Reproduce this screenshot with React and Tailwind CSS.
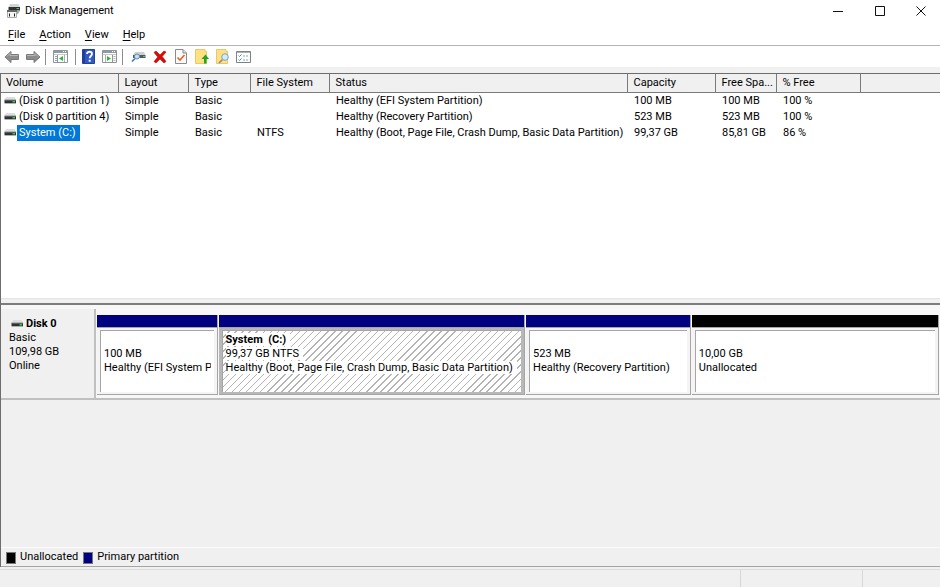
import { useState } from "react";

const COLUMNS = [
  { label: "Volume", width: "w-[117px]" },
  { label: "Layout", width: "w-[70px]" },
  { label: "Type", width: "w-[62px]" },
  { label: "File System", width: "w-[79px]" },
  { label: "Status", width: "w-[298px]" },
  { label: "Capacity", width: "w-[88px]" },
  { label: "Free Spa...", width: "w-[61px]" },
  { label: "% Free", width: "w-[84px]" },
];

const VOLUMES = [
  { name: "(Disk 0 partition 1)", layout: "Simple", type: "Basic", fs: "", status: "Healthy (EFI System Partition)", capacity: "100 MB", free: "100 MB", percent: "100 %" },
  { name: "(Disk 0 partition 4)", layout: "Simple", type: "Basic", fs: "", status: "Healthy (Recovery Partition)", capacity: "523 MB", free: "523 MB", percent: "100 %" },
  { name: "System (C:)", layout: "Simple", type: "Basic", fs: "NTFS", status: "Healthy (Boot, Page File, Crash Dump, Basic Data Partition)", capacity: "99,37 GB", free: "85,81 GB", percent: "86 %" },
];

const PARTITIONS = [
  { title: "", size: "100 MB", status: "Healthy (EFI System Partition)", bar: "bg-[#000080]" },
  { title: "System  (C:)", size: "99,37 GB NTFS", status: "Healthy (Boot, Page File, Crash Dump, Basic Data Partition)", bar: "bg-[#000080]" },
  { title: "", size: "523 MB", status: "Healthy (Recovery Partition)", bar: "bg-[#000080]" },
  { title: "", size: "10,00 GB", status: "Unallocated", bar: "bg-black" },
];

function DriveIcon() {
  return (
    <svg width="13" height="8" viewBox="0 0 13 8" className="shrink-0">
      <path d="M2 0h8.500L12 3H.5z" fill="#dedede" />
      <path d="M.5 3H12v3H.5z" fill="#2f3234" />
      <path d="M.5 2.500H12v1H.5z" fill="#8a8d8f" />
      <path d="M.5 6H12v.7H.5z" fill="#8f9294" />
      <path d="M8.500 4H11v1.500H8.500z" fill="#2fc93f" />
    </svg>
  );
}

function AppIcon() {
  return (
    <svg width="16" height="14" viewBox="0 0 16 14">
      <path d="M4 0h8.500L14 3H2.500z" fill="#d4d4d4" />
      <path d="M2.500 3H14v3.500H2.500z" fill="#303335" />
      <path d="M10.500 4H13v1h-2.500z" fill="#3fd24a" />
      <path d="M1.500 7.500h9v6h-9z" fill="#f4f4f4" stroke="#aaa" />
      <path d="M1 6h10v2H1z" fill="#666" />
      <path d="M3 9.500h1v3H3zM8 9.500h1v3H8z" fill="#222" />
      <path d="M11 7h3l-2 3h-1z" fill="#aaa" />
    </svg>
  );
}

function BackIcon() {
  return (
    <svg width="16" height="14" viewBox="0 0 16 14">
      <path d="M1 7l6-5.500v3h7.500v5H7v3z" fill="#8c8c8c" stroke="#7a7a7a" strokeLinejoin="round" />
      <path d="M3 6.500l3-3v2h8" fill="none" stroke="#b8b8b8" />
    </svg>
  );
}

function ForwardIcon() {
  return (
    <svg width="16" height="14" viewBox="0 0 16 14">
      <path d="M15 7L9 1.500v3H1.500v5H9v3z" fill="#8c8c8c" stroke="#7a7a7a" strokeLinejoin="round" />
      <path d="M2 5.500h8v-2l3 3" fill="none" stroke="#b8b8b8" />
    </svg>
  );
}

// console window with a side pane, green arrow points to the pane being toggled
function PaneIcon({ right }) {
  return (
    <svg width="15" height="13" viewBox="0 0 15 13">
      <path d="M.5.5h14v12H.5z" fill="#fff" stroke="#8f9499" />
      <path d="M1 1h13v2H1z" fill="#8f9aa5" />
      <path d="M10 1h1v1h-1zM12 1h1v1h-1z" fill="#fff" />
      <path d="M1 4.500h13" stroke="#c3c9ce" />
      {right ? (
        <>
          <path d="M10.500 5v7" stroke="#8f9499" />
          <path d="M11.500 6.500h2M11.500 8.500h2M11.500 10.500h2" stroke="#aab1b8" />
          <path d="M3.500 5v7" stroke="#a9b0b6" />
          <path d="M5 6l4 2.500L5 11z" fill="#2fb52f" />
        </>
      ) : (
        <>
          <path d="M4.500 5v7" stroke="#8f9499" />
          <path d="M2 6.500h2M2 8.500h2M2 10.500h2" stroke="#7fa6cc" />
          <path d="M11.500 5v7" stroke="#a9b0b6" />
          <path d="M10 6L6 8.500l4 2.500z" fill="#2fb52f" />
        </>
      )}
    </svg>
  );
}

function HelpIcon() {
  return (
    <svg width="13" height="15" viewBox="0 0 13 15">
      <path d="M.5.5h12v14H.5z" fill="#3159c4" stroke="#23409a" />
      <path d="M1 1h2v13H1z" fill="#223f98" />
      <path d="M5 5c0-3 5-3 5 0 0 2-2.300 2-2.300 4.200" fill="none" stroke="#fff" strokeWidth="1.800" />
      <path d="M6.700 10.800h2v1.900h-2z" fill="#fff" />
    </svg>
  );
}

function RescanIcon() {
  return (
    <svg width="15" height="13" viewBox="0 0 15 13">
      <path d="M4 2h9l1.500 3H2z" fill="#cfcfcf" />
      <path d="M2 5h12.500v3H2z" fill="#55595b" />
      <path d="M12 6h2v1h-2z" fill="#3fd24a" />
      <path d="M4 8.500L1 11.500" stroke="#4c7ea6" strokeWidth="1.700" />
      <circle cx="6" cy="6.500" r="2.500" fill="#bfe0f5" stroke="#5f8fb5" />
    </svg>
  );
}

function DeleteIcon() {
  return (
    <svg width="14" height="14" viewBox="0 0 14 14">
      <path d="M1 2.500L3 1l4 4 4-4 2 1-3.800 4.500L13 11.500 11 13 7 9l-4 4-2-1.500L4.800 7z" fill="#d90b0b" stroke="#b80000" strokeWidth=".6" />
    </svg>
  );
}

function PropertiesIcon() {
  return (
    <svg width="12" height="15" viewBox="0 0 12 15">
      <path d="M.5.5H8L11.500 4v10.500H.5z" fill="#fbfbfb" stroke="#8b8b8b" />
      <path d="M8 .5V4h3.500" fill="#ddd" stroke="#8b8b8b" />
      <path d="M2.500 8.500l2.500 2.500 4.500-5" fill="none" stroke="#e8622a" strokeWidth="1.600" />
    </svg>
  );
}

function FolderUpIcon() {
  return (
    <svg width="14" height="15" viewBox="0 0 14 15">
      <path d="M.5.5H10v2h1.500v12H.5z" fill="#ffe083" stroke="#e8c869" />
      <path d="M9 14.500V10H6.500l4-4.500 3.500 4.500h-2.500v4.500z" fill="#23a423" />
    </svg>
  );
}

function FolderSearchIcon() {
  return (
    <svg width="14" height="15" viewBox="0 0 14 15">
      <path d="M.5.5H10v2h1.500v12H.5z" fill="#ffe083" stroke="#e8c869" />
      <path d="M6.500 10.500L3 14" stroke="#8c8c8c" strokeWidth="1.600" />
      <circle cx="9" cy="8" r="3.300" fill="#d3eafa" stroke="#7ba4c4" />
    </svg>
  );
}

function ListIcon() {
  return (
    <svg width="15" height="12" viewBox="0 0 15 12">
      <path d="M.5.5h14v11H.5z" fill="#fff" stroke="#7c8287" />
      <path d="M1 1h13v1H1z" fill="#a9b0b6" />
      <path d="M2.500 4.500l1 1 2-2M2.500 8.500l1 1 2-2" fill="none" stroke="#3c87d0" />
      <path d="M7 5h2M10 5h2M7 9h2M10 9h2" stroke="#8fa3b3" />
    </svg>
  );
}

function ToolButton({ label, children }) {
  return (
    <button aria-label={label} className="flex h-5 w-[21px] items-center justify-center hover:bg-[#e5f3ff]">
      {children}
    </button>
  );
}

function Separator() {
  return <div className="mx-px h-4 w-px bg-[#8d8d8d]" />;
}

function Partition({ part, selected }) {
  return (
    <div className="flex min-w-0 flex-col border-r border-b border-[#a5a5a5]">
      <div className={`h-3 shrink-0 ${part.bar}`} />
      <div className="h-px shrink-0 bg-[#a5a5a5]" />
      <div className={`flex-1 px-[3px] py-[2px] ${selected ? "bg-[#b8b8b8]" : "bg-[#f4f4f4]"}`}>
        <div
          className={`h-full overflow-hidden border-t border-l border-[#a5a5a5] px-[3px] pt-[2px] leading-[14px] whitespace-pre ${
            selected ? "bg-[repeating-linear-gradient(135deg,#fff_0px,#fff_4px,#b4b4b4_4px,#b4b4b4_5px)]" : "bg-white"
          }`}
        >
          <div className="h-[14px] font-bold">
            <span className={selected ? "bg-white pr-1" : ""}>{part.title}</span>
          </div>
          <div>
            <span className={selected ? "bg-white pr-1" : ""}>{part.size}</span>
          </div>
          <div className="overflow-hidden">
            <span className={selected ? "bg-white pr-1" : ""}>{part.status}</span>
          </div>
        </div>
      </div>
    </div>
  );
}

export default function App() {
  const [selected, setSelected] = useState(2);

  return (
    <div className="flex h-screen flex-col bg-[#f0f0f0] font-['Roboto',sans-serif] text-[11px] text-black">
      <header className="flex h-[22px] shrink-0 items-center bg-white pl-[6px]">
        <AppIcon />
        <h1 className="ml-[3px] flex-1">Disk Management</h1>
        <div className="flex">
          <button aria-label="Minimize" className="flex h-[22px] w-10 items-center justify-center">
            <svg width="10" height="10" viewBox="0 0 10 10"><path d="M0 5.500h10" stroke="#111" /></svg>
          </button>
          <button aria-label="Maximize" className="flex h-[22px] w-[44px] items-center justify-center">
            <svg width="10" height="10" viewBox="0 0 10 10"><path d="M.5.5h9v9h-9z" fill="none" stroke="#111" /></svg>
          </button>
          <button aria-label="Close" className="flex h-[22px] w-[38px] items-center justify-center">
            <svg width="10" height="10" viewBox="0 0 10 10"><path d="M.5.5l9 9M9.500.5l-9 9" stroke="#111" /></svg>
          </button>
        </div>
      </header>

      <nav className="flex h-[24px] shrink-0 items-center gap-[14px] border-b border-[#b4b4b4] bg-white pt-1 pl-2">
        {["File", "Action", "View", "Help"].map((m) => (
          <button key={m}>
            <span className="underline underline-offset-2">{m[0]}</span>
            {m.slice(1)}
          </button>
        ))}
      </nav>

      <div className="flex h-[21px] shrink-0 items-center bg-white">
        <div className="flex px-px">
          <ToolButton label="Back"><BackIcon /></ToolButton>
          <ToolButton label="Forward"><ForwardIcon /></ToolButton>
        </div>
        <Separator />
        <div className="flex px-[3px]">
          <ToolButton label="Show/Hide Console Tree"><PaneIcon /></ToolButton>
        </div>
        <Separator />
        <div className="flex px-px">
          <ToolButton label="Help"><HelpIcon /></ToolButton>
          <ToolButton label="Show/Hide Action Pane"><PaneIcon right /></ToolButton>
        </div>
        <Separator />
        <div className="flex px-1">
          <ToolButton label="Rescan Disks"><RescanIcon /></ToolButton>
          <ToolButton label="Delete"><DeleteIcon /></ToolButton>
          <ToolButton label="Properties"><PropertiesIcon /></ToolButton>
          <ToolButton label="Open"><FolderUpIcon /></ToolButton>
          <ToolButton label="Explore"><FolderSearchIcon /></ToolButton>
          <ToolButton label="Settings"><ListIcon /></ToolButton>
        </div>
      </div>

      <main className="mt-[6px] flex min-h-0 flex-1 flex-col border-t border-l border-[#6d6d6d]">
        <section className="min-h-0 flex-[225] overflow-hidden bg-white">
          <table className="w-full table-fixed border-collapse text-left leading-4 whitespace-nowrap">
            <thead>
              <tr className="h-[18px] bg-[#f0f0f0]">
                {COLUMNS.map((c) => (
                  <th key={c.label} className={`${c.width} border-r border-b border-[#7a7a7a] p-0 pt-px pl-[6px] font-normal first:pl-[5px]`}>
                    {c.label}
                  </th>
                ))}
                <td className="border-b border-[#7a7a7a] p-0" />
              </tr>
            </thead>
            <tbody>
              {VOLUMES.map((v, i) => (
                <tr key={v.name} onClick={() => setSelected(i)} className="h-4">
                  <td className="p-0 pl-[3px]">
                    <div className="flex items-center">
                      <DriveIcon />
                      <span className={`pl-[2px] ${i === selected ? "bg-[#0078d7] pr-1 text-white" : ""}`}>{v.name}</span>
                    </div>
                  </td>
                  <td className="p-0 pl-[7px]">{v.layout}</td>
                  <td className="p-0 pl-[7px]">{v.type}</td>
                  <td className="p-0 pl-[7px]">{v.fs}</td>
                  <td className="p-0 pl-[7px]">{v.status}</td>
                  <td className="p-0 pl-[7px]">{v.capacity}</td>
                  <td className="p-0 pl-[7px]">{v.free}</td>
                  <td className="p-0 pl-[7px]">{v.percent}</td>
                  <td className="p-0" />
                </tr>
              ))}
            </tbody>
          </table>
        </section>

        <div className="h-[5px] shrink-0 border-t border-[#e3e3e3] bg-[#f0f0f0]" />

        <section className="flex min-h-0 flex-[262] flex-col border-t-2 border-b border-t-[#7d7d7d] border-b-[#a5a5a5]">
          <div className="h-1 shrink-0 bg-[#f7f7f7]" />
          <div className="flex h-[91px] shrink-0 border-b-2 border-[#c0c0c0]">
            <div className="w-[95px] shrink-0 border-r-2 border-[#c0c0c0] pt-2 pl-2 leading-[14px]">
              <div className="flex items-center gap-[2px] pl-[2px] font-bold">
                <DriveIcon />
                Disk 0
              </div>
              <div>Basic</div>
              <div>109,98 GB</div>
              <div>Online</div>
            </div>
            <div className="grid min-w-0 flex-1 grid-cols-[120fr_305fr_164fr_246fr] gap-px bg-[#f7f7f7] pt-[6px] pr-px pb-[3px] pl-px">
              {PARTITIONS.map((p, i) => (
                <Partition key={p.size} part={p} selected={i === 1} />
              ))}
            </div>
          </div>
          <div className="flex-1" />
          <footer className="flex h-[19px] shrink-0 items-center border-t border-[#fbfbfb] pt-px pl-[5px]">
            <span className="mr-1 h-3 w-[10px] border border-[#777] bg-black" />
            <span className="mr-[5px]">Unallocated</span>
            <span className="mr-1 h-3 w-[10px] border border-[#777] bg-[#000080]" />
            <span>Primary partition</span>
          </footer>
        </section>
      </main>

      <div className="mt-[2px] flex h-[18px] shrink-0 justify-end border-t border-[#dcdcdc]">
        <div className="w-[122px] border-l border-[#d7d7d7]" />
        <div className="w-[78px] border-l border-[#d7d7d7]" />
      </div>
    </div>
  );
}
